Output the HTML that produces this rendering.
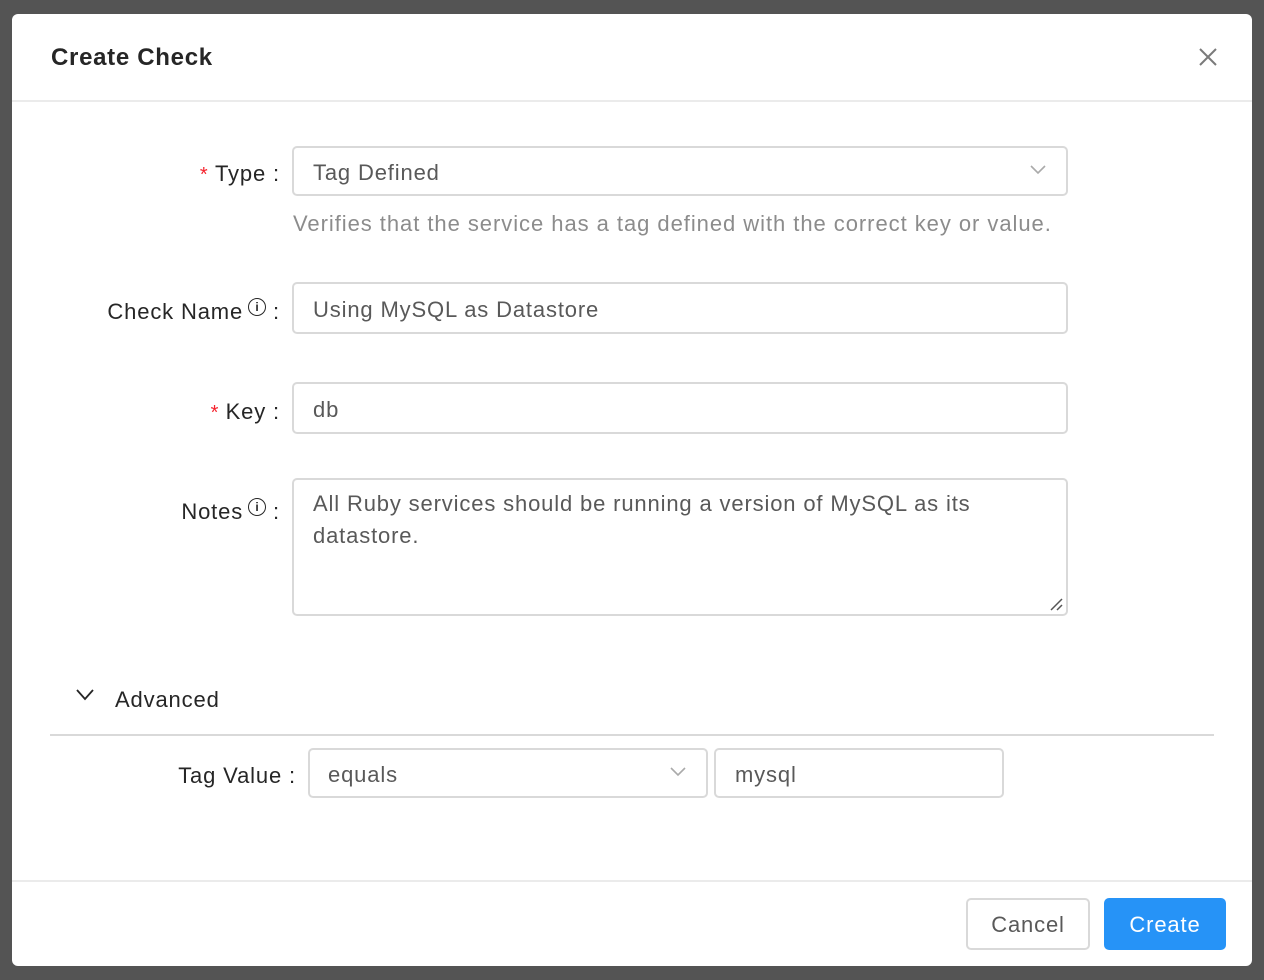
<!DOCTYPE html>
<html><head><style>
body{margin:0;width:1264px;height:980px;background:#545454;font-family:"Liberation Sans",sans-serif;position:relative;overflow:hidden;letter-spacing:0.85px}
.m{position:absolute;left:12px;top:14px;width:1240px;height:952px;background:#fff;border-radius:6px}
.a{position:absolute}
.lbl{position:absolute;font-size:22px;color:#262626;text-align:right;white-space:nowrap}
.in{position:absolute;border:2px solid #d9d9d9;border-radius:5px;box-sizing:border-box;font-size:22px;color:#595959;padding-left:19px}
.req{color:#f5222d;font-size:20px}
.info{display:inline-block;width:16px;height:16px;border:1.8px solid #262626;border-radius:50%;font-size:12px;line-height:16px;text-align:center;vertical-align:8px;font-weight:bold;margin-left:5px;letter-spacing:0}
</style></head><body>
<div class="m">
<div class="a" style="left:39px;top:30px;font-size:24px;color:#262626;font-weight:bold;letter-spacing:0.7px">Create Check</div>
<svg class="a" style="left:1186px;top:33px" width="20" height="20"><path d="M2 2L18 18M18 2L2 18" stroke="#7a7a7a" stroke-width="2"/></svg>
<div class="a" style="left:0;top:86px;width:1240px;height:2px;background:#ebebeb"></div>

<div class="lbl" style="right:972px;top:147px"><span class="req">* </span>Type :</div>
<div class="in" style="left:280px;top:132px;width:776px;height:50px;line-height:50px">Tag Defined
<svg class="a" style="right:20px;top:16px" width="16" height="12"><path d="M1 2L8 9L15 2" stroke="#aaa" stroke-width="1.6" fill="none"/></svg></div>
<div class="a" style="left:281px;top:197px;font-size:22px;color:#8c8c8c;letter-spacing:0.95px">Verifies that the service has a tag defined with the correct key or value.</div>

<div class="lbl" style="right:972px;top:284px">Check Name<span class="info">i</span> :</div>
<div class="in" style="left:280px;top:268px;width:776px;height:52px;line-height:52px">Using MySQL as Datastore</div>

<div class="lbl" style="right:972px;top:385px"><span class="req">* </span>Key :</div>
<div class="in" style="left:280px;top:368px;width:776px;height:52px;line-height:52px">db</div>

<div class="lbl" style="right:972px;top:484px">Notes<span class="info">i</span> :</div>
<div class="in" style="left:280px;top:464px;width:776px;height:138px;line-height:32px;padding-top:8px">All Ruby services should be running a version of MySQL as its<br>datastore.
<svg class="a" style="right:3px;bottom:3px" width="14" height="14"><path d="M2 13L13 2M8 13L13 8" stroke="#555" stroke-width="1.5"/></svg></div>

<svg class="a" style="left:64px;top:674px" width="18" height="14"><path d="M1 2L9 11L17 2" stroke="#262626" stroke-width="1.8" fill="none"/></svg>
<div class="a" style="left:103px;top:673px;font-size:22px;color:#262626">Advanced</div>
<div class="a" style="left:38px;top:720px;width:1164px;height:2px;background:#d9d9d9"></div>

<div class="lbl" style="right:956px;top:749px">Tag Value :</div>
<div class="in" style="left:296px;top:734px;width:400px;height:50px;line-height:50px;padding-left:18px">equals
<svg class="a" style="right:20px;top:16px" width="16" height="12"><path d="M1 2L8 9L15 2" stroke="#aaa" stroke-width="1.6" fill="none"/></svg></div>
<div class="in" style="left:702px;top:734px;width:290px;height:50px;line-height:50px;padding-left:19px">mysql</div>

<div class="a" style="left:0;top:866px;width:1240px;height:2px;background:#ebebeb"></div>
<div class="a" style="left:954px;top:884px;width:124px;height:52px;border:2px solid #d9d9d9;border-radius:5px;box-sizing:border-box;text-align:center;line-height:50px;font-size:22px;color:#595959">Cancel</div>
<div class="a" style="left:1092px;top:884px;width:122px;height:52px;background:#2693f7;border-radius:5px;text-align:center;line-height:54px;font-size:22px;color:#fff">Create</div>
</div>
</body></html>
